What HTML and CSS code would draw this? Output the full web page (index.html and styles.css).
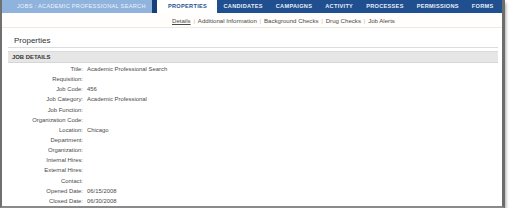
FILE: index.html
```html
<!DOCTYPE html>
<html>
<head>
<meta charset="utf-8">
<link rel="stylesheet" href="styles.css">
</head>
<body>
<div class="frame">
  <div class="topbar">
    <div class="crumb">JOBS : ACADEMIC PROFESSIONAL SEARCH</div>
    <div class="notch"></div>
    <div class="tab active">PROPERTIES</div>
    <div class="tabs">
      <div class="tab">CANDIDATES</div>
      <div class="tab">CAMPAIGNS</div>
      <div class="tab">ACTIVITY</div>
      <div class="tab">PROCESSES</div>
      <div class="tab">PERMISSIONS</div>
      <div class="tab">FORMS</div>
    </div>
  </div>
  <div class="subnav">
    <span class="sublink current">Details</span><span class="sep">|</span>
    <span class="sublink">Additional Information</span><span class="sep">|</span>
    <span class="sublink">Background Checks</span><span class="sep">|</span>
    <span class="sublink">Drug Checks</span><span class="sep">|</span>
    <span class="sublink">Job Alerts</span>
  </div>
  <div class="content">
    <h1 class="title">Properties</h1>
    <div class="section-bar">JOB DETAILS</div>
    <div class="details">
      <div class="label">Title:</div><div class="value">Academic Professional Search</div>
      <div class="label">Requisition:</div><div class="value"></div>
      <div class="label">Job Code:</div><div class="value">456</div>
      <div class="label">Job Category:</div><div class="value">Academic Professional</div>
      <div class="label">Job Function:</div><div class="value"></div>
      <div class="label">Organization Code:</div><div class="value"></div>
      <div class="label">Location:</div><div class="value">Chicago</div>
      <div class="label">Department:</div><div class="value"></div>
      <div class="label">Organization:</div><div class="value"></div>
      <div class="label">Internal Hires:</div><div class="value"></div>
      <div class="label">External Hires:</div><div class="value"></div>
      <div class="label">Contact:</div><div class="value"></div>
      <div class="label">Opened Date:</div><div class="value">06/15/2008</div>
      <div class="label">Closed Date:</div><div class="value">06/30/2008</div>
    </div>
  </div>
</div>
</body>
</html>
```

FILE: styles.css
```css
html, body {
  margin: 0;
  padding: 0;
  background: #ffffff;
}
body {
  font-family: "Liberation Sans", Arial, sans-serif;
  color: #444;
}
.frame {
  width: 500px;
  height: 206px;
  border-left: 2px solid #707070;
  border-right: 3px solid #6c6c6c;
  border-bottom: 2px solid #8a8a8a;
  box-shadow: 1px 3px 3px rgba(0,0,0,0.35);
  overflow: hidden;
  background: #fff;
}
.topbar {
  display: flex;
  height: 13px;
  background: #1f4f8f;
  align-items: stretch;
}
.crumb {
  width: 135px;
  padding-left: 15px;
  background: #8fb3dc;
  color: #eef4fb;
  font-size: 5.6px;
  letter-spacing: 0.3px;
  line-height: 13px;
  white-space: nowrap;
  overflow: hidden;
}
.notch {
  width: 5px;
  background: #173f78;
}
.tab {
  font-size: 5.6px;
  font-weight: bold;
  letter-spacing: 0.3px;
  line-height: 13px;
  color: #e8eef7;
  padding: 0 6.5px;
  white-space: nowrap;
}
.tab.active {
  box-sizing: border-box;
  background: #ffffff;
  color: #1f4f8f;
  padding: 0 0 0 11px;
  width: 60px;
}
.tabs {
  display: flex;
  flex: 1;
}
.subnav {
  height: 14px;
  padding-left: 170px;
  display: flex;
  align-items: center;
  font-size: 6.1px;
  color: #4a4a4a;
  border-bottom: 1px solid #ede8e0;
  background: #fffefc;
  white-space: nowrap;
}
.sublink.current {
  text-decoration: underline;
}
.sep {
  color: #bbb;
  padding: 0 2.8px;
}
.content {
  padding: 0 4px 0 6px;
}
.title {
  margin: 0;
  font-weight: normal;
  font-size: 8px;
  color: #333;
  padding: 6px 0 0 6px;
  height: 13px;
  line-height: 13px;
  border-bottom: 1px solid #dcdcdc;
}
.section-bar {
  margin-top: 3px;
  height: 10px;
  line-height: 10px;
  background: #e6e6e6;
  border-top: 1px solid #dadada;
  border-bottom: 1px solid #d6d6d6;
  font-size: 5.9px;
  font-weight: bold;
  color: #333;
  padding-left: 4px;
}
.details {
  display: grid;
  grid-template-columns: 75px 1fr;
  column-gap: 4px;
  grid-auto-rows: 10.15px;
  padding-top: 1px;
  font-size: 5.9px;
  line-height: 10.15px;
  color: #4a4a4a;
}
.label {
  text-align: right;
  white-space: nowrap;
}
.value {
  white-space: nowrap;
}
```
